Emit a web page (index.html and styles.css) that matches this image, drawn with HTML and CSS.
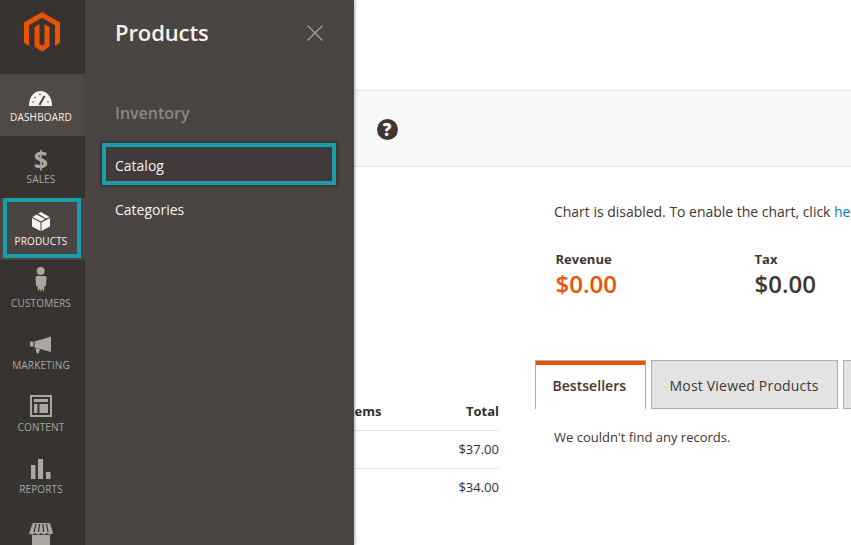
FILE: index.html
```html
<!DOCTYPE html>
<html lang="en">
<head>
<meta charset="utf-8">
<title>Dashboard</title>
<link rel="stylesheet" href="styles.css">
</head>
<body>
<div class="app">
  <nav class="sidebar">
    <div class="logo">
      <svg class="logo-svg" viewBox="0 0 36 40" width="36" height="40"><path fill="#eb5202" d="M18 0L36 10.4V31L31 33.9V13.3L18 5.8 5 13.3V33.9L0 31V10.4Z"/><path fill="#eb5202" d="M18 33.5L15.5 32V12L10.5 15V34.5L18 39.5 25.5 34.5V15L20.5 12V32Z"/></svg>
    </div>
    <a class="item active">
      <svg class="icon" viewBox="0 0 36 24"><path fill="#f7f3eb" d="M6 19C6 10 11 4 17.5 4S29 10 29 19Z"/><path fill="none" stroke="#4a4542" stroke-width="2" d="M16.5 18L21.5 9"/><g fill="#4a4542"><circle cx="10" cy="15" r=".8"/><circle cx="12" cy="10.5" r=".8"/><circle cx="17" cy="7.5" r=".8"/><circle cx="25" cy="15" r=".8"/></g></svg>
      <span class="label">Dashboard</span>
    </a>
    <a class="item">
      <span class="dollar">$</span>
      <span class="label">Sales</span>
    </a>
    <a class="item selected">
      <svg class="icon" viewBox="0 0 36 24"><g fill="#f7f3eb"><path d="M9 7L17.5 11.5V20L9 15.5Z"/><path d="M27 7L18.5 11.5V20L27 15.5Z"/><path d="M9.5 6L13.5 3.5 22 8 18 10.5Z"/><path d="M15 2.5L18 1 26.500 6 23 7.500Z"/></g></svg>
      <span class="label">Products</span>
    </a>
    <a class="item">
      <svg class="icon" viewBox="0 0 36 24"><g fill="#aaa6a0"><circle cx="17.700" cy="-2" r="4"/><path d="M14 3H22Q23.500 3 23.500 5L23 13H21.500L21 19L19 15.500L18 19L16.500 15.500L15 19L14.500 13H13L12.500 5Q12.500 3 14 3Z"/></g></svg>
      <span class="label">Customers</span>
    </a>
    <a class="item">
      <svg class="icon" viewBox="0 0 36 24"><g fill="#aaa6a0"><path d="M11.500 6.500L28 1.500V17L11.500 12.500Z"/><path d="M7 6.500L10.500 6.500V11.500L7 11.500Z"/><path d="M12.500 13L17 14.200L15.500 18.500L13.500 18Z"/></g></svg>
      <span class="label">Marketing</span>
    </a>
    <a class="item">
      <svg class="icon" viewBox="0 0 36 24"><g fill="#aaa6a0"><path fill-rule="evenodd" d="M7-2H29V20H7ZM9 0V18H27V0Z"/><path d="M11 2H25V5H11Z"/><path d="M11 7H14.500V16H11Z"/><path d="M16.500 7H25V16H16.500Z"/></g></svg>
      <span class="label">Content</span>
    </a>
    <a class="item">
      <svg class="icon" viewBox="0 0 36 24"><g fill="#aaa6a0"><path d="M8 6H12.500V20H8Z"/><path d="M15 0H20V20H15Z"/><path d="M23 13H27.500V20H23Z"/></g></svg>
      <span class="label">Reports</span>
    </a>
    <a class="item">
      <svg class="icon" viewBox="0 0 36 24"><g fill="#aaa6a0"><path d="M10 2H27L30 12Q27 15 24 12Q21 15 18 12Q15 15 12 12Q9 15 6 12Z"/><path d="M9 14H27V24H9Z"/></g><g stroke="#373330" stroke-width="1.200"><path d="M13 3L11 11"/><path d="M16.500 3L15.500 11"/><path d="M20 3L20.500 11"/><path d="M23.500 3L25 11"/></g></svg>
    </a>
  </nav>

  <aside class="panel">
    <div class="panel-head">
      <h2 class="panel-title">Products</h2>
      <svg class="close" viewBox="0 0 16 16" width="16" height="16"><path fill="none" stroke="#a79d95" stroke-width="1.400" d="M.5.5L15.500 15.500M15.500.5L.5 15.500"/></svg>
    </div>
    <div class="group">Inventory</div>
    <a class="link current">Catalog</a>
    <a class="link">Categories</a>
  </aside>

  <main class="main">
    <div class="band"><span class="help">?</span></div>
    <div class="columns">
      <section class="left">
        <div class="row head"><span>Items</span><span>Total</span></div>
        <div class="row"><span></span><span>$37.00</span></div>
        <div class="row last"><span></span><span>$34.00</span></div>
      </section>
      <section class="right">
        <p class="chart">Chart is disabled. To enable the chart, click <a class="here">here</a>.</p>
        <div class="stats">
          <div class="stat"><div class="stat-label">Revenue</div><div class="stat-value orange">$0.00</div></div>
          <div class="stat"><div class="stat-label">Tax</div><div class="stat-value">$0.00</div></div>
        </div>
        <div class="tabs">
          <div class="tab on">Bestsellers</div>
          <div class="tab">Most Viewed Products</div>
          <div class="tab">New Customers</div>
        </div>
        <p class="empty">We couldn't find any records.</p>
      </section>
    </div>
  </main>
</div>
</body>
</html>
```

FILE: styles.css
```css
html, body { margin: 0; padding: 0; height: 100%; overflow: hidden; }
body { font-family: "Open Sans", "Noto Sans", sans-serif; color: #41362f; background: #fff; }
.app { display: flex; width: 851px; height: 545px; overflow: hidden; }

.sidebar { flex: none; width: 85px; height: 545px; background: #373330; display: flex; flex-direction: column; overflow: hidden; }
.logo { flex: none; height: 74px; box-sizing: border-box; padding: 12px 2px 0 0; display: flex; justify-content: center; align-items: flex-start; }
.logo-svg { display: block; }
.item { flex: none; position: relative; height: 62px; box-sizing: border-box; padding: 13px 3px 0 0; display: flex; flex-direction: column; align-items: center; color: #aaa6a0; }
.item.active { background: #4f4a46; color: #f7f3eb; }
.item.selected { background: #4a4542; color: #f7f3eb; }
.item.selected::after { content: ""; position: absolute; left: 3px; right: 4px; top: 0; bottom: 2px; border: 4px solid #1a9ea8; }
.icon { display: block; flex: none; width: 36px; height: 24px; overflow: visible; }
.dollar { display: block; flex: none; height: 24px; line-height: 20px; font-size: 25px; font-weight: 700; color: #aaa6a0; }
.label { display: block; height: 12px; line-height: 12px; font-size: 10px; letter-spacing: .15px; text-transform: uppercase; white-space: nowrap; }

.panel { flex: none; position: relative; z-index: 2; width: 268.500px; height: 545px; box-sizing: border-box; background: #4a4542; box-shadow: 1px 0 3px rgba(0,0,0,.3); padding: 0 18px 0 17px; color: #f7f3eb; }
.panel-head { display: flex; justify-content: space-between; align-items: center; height: 64px; padding-left: 13px; padding-right: 12.500px; }
.panel-title { margin: 0; font-size: 22px; font-weight: 600; line-height: 30px; letter-spacing: -.1px; }
.close { display: block; flex: none; margin-top: 2px; }
.group { margin-top: 35px; padding-left: 13px; font-size: 16px; font-weight: 600; line-height: 28px; color: #8f8680; }
.link { display: flex; align-items: center; box-sizing: border-box; height: 42px; padding-left: 13px; font-size: 14px; color: #f7f3eb; }
.link.current { margin-top: 16px; background: #41393a; border: 4px solid #1a9ea8; padding: 2px 0 0 9px; box-shadow: 0 0 2px 2px rgba(0,0,0,.25); }
.link + .link { margin-top: 3px; }

.main { flex: 1; min-width: 0; overflow: hidden; }
.band { margin-top: 90px; background: #f8f8f8; border-top: 1px solid #e3e3e3; border-bottom: 1px solid #e3e3e3; height: 75px; display: flex; align-items: center; padding-left: 23px; }
.help { width: 21px; height: 21px; border-radius: 50%; background: #41362f; color: #fff; font-size: 17px; font-weight: 800; line-height: 21px; text-align: center; margin-top: 1px; }
.columns { display: flex; }
.left { flex: none; width: 165.500px; margin-left: -20px; padding-top: 225px; font-size: 13px; }
.row { display: flex; justify-content: space-between; align-items: center; border-bottom: 1px solid #e3e3e3; padding: 0 0 2px 11px; height: 35px; color: #303030; }
.row.head { height: 38px; padding-bottom: 0; font-weight: 700; }
.row.last { border-bottom: 0; }
.right { flex: none; width: 500px; margin-left: 35.500px; padding-left: 20px; position: relative; }
.chart { margin: 35px 0 0 -.5px; font-size: 14px; letter-spacing: -.02px; line-height: 20px; white-space: nowrap; color: #41362f; }
.here { color: #007bdb; }
.stats { display: flex; margin-top: 28px; padding-left: 1px; }
.stat { width: 199px; }
.stat-label { font-size: 13px; font-weight: 700; line-height: 18px; color: #41362f; }
.stat-value { font-size: 24px; font-weight: 600; line-height: 31px; color: #41362f; }
.orange { color: #eb5202; }
.tabs { display: flex; gap: 5px; margin: 61px 0 0 -20px; height: 49px; box-sizing: border-box; }
.tab { flex: none; box-sizing: border-box; height: 49px; line-height: 49px; padding: 0 18px; border: 1px solid #adadad; background: #e3e3e3; font-size: 14px; letter-spacing: .2px; white-space: nowrap; color: #41362f; }
.tab.on { width: 111px; padding: 0 17px; background: #fff; box-shadow: inset 0 4px 0 #eb5202; border-bottom: 0; font-weight: 600; letter-spacing: .03px; }
.empty { margin: 18px 0 0 -.5px; font-size: 13px; line-height: 20px; color: #41362f; }
```
